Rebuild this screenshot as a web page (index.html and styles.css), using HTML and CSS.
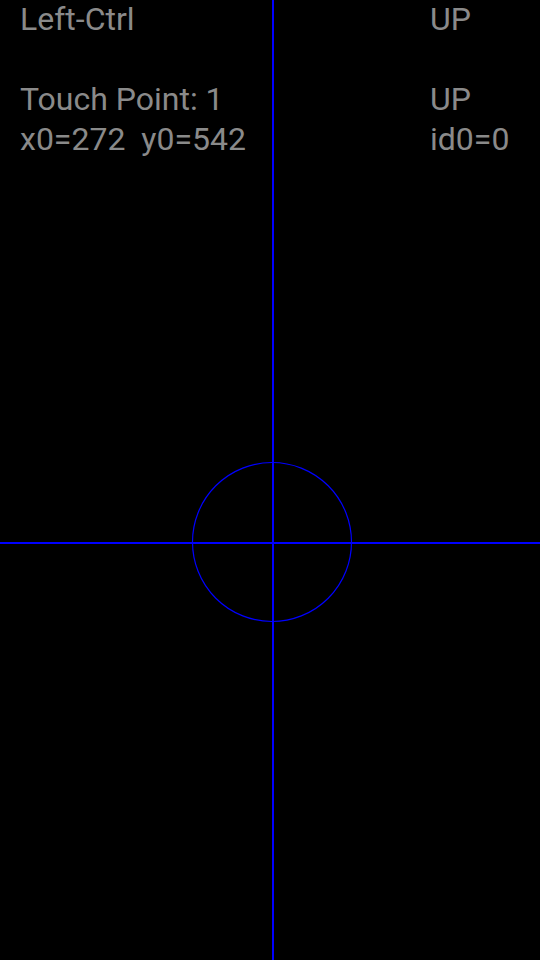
FILE: index.html
```html
<!DOCTYPE html>
<html>
<head>
<meta charset="utf-8">
<link rel="stylesheet" href="styles.css">
</head>
<body>
<div class="screen">
  <svg class="canvas" width="540" height="960" viewBox="0 0 540 960">
    <line x1="273" y1="0" x2="273" y2="960" stroke="#0000ff" stroke-width="2"/>
    <line x1="0" y1="543" x2="540" y2="543" stroke="#0000ff" stroke-width="2"/>
    <circle cx="272" cy="542" r="79.5" fill="none" stroke="#0000ff" stroke-width="1.2"/>
  </svg>
  <div class="info">
    <div class="row"><span class="left">Left-Ctrl</span><span class="right">UP</span></div>
    <div class="row"><span class="left">&nbsp;</span><span class="right"></span></div>
    <div class="row"><span class="left">Touch Point: 1</span><span class="right">UP</span></div>
    <div class="row"><span class="left">x0=272&nbsp;&nbsp;y0=542</span><span class="right">id0=0</span></div>
  </div>
</div>
</body>
</html>
```
FILE: styles.css
```css
html, body {
  margin: 0;
  padding: 0;
  background: #000;
}
.screen {
  position: relative;
  width: 540px;
  height: 960px;
  background: #000;
  overflow: hidden;
}
.canvas {
  position: absolute;
  left: 0;
  top: 0;
}
.info {
  position: relative;
  margin-top: -1px;
  padding-left: 20px;
  font-family: Roboto, "Noto Sans", sans-serif;
  font-size: 32px;
  line-height: 40px;
  color: #8a8a8a;
}
.row {
  display: grid;
  grid-template-columns: 410px 1fr;
  height: 40px;
}
.left, .right {
  white-space: pre;
}
```
